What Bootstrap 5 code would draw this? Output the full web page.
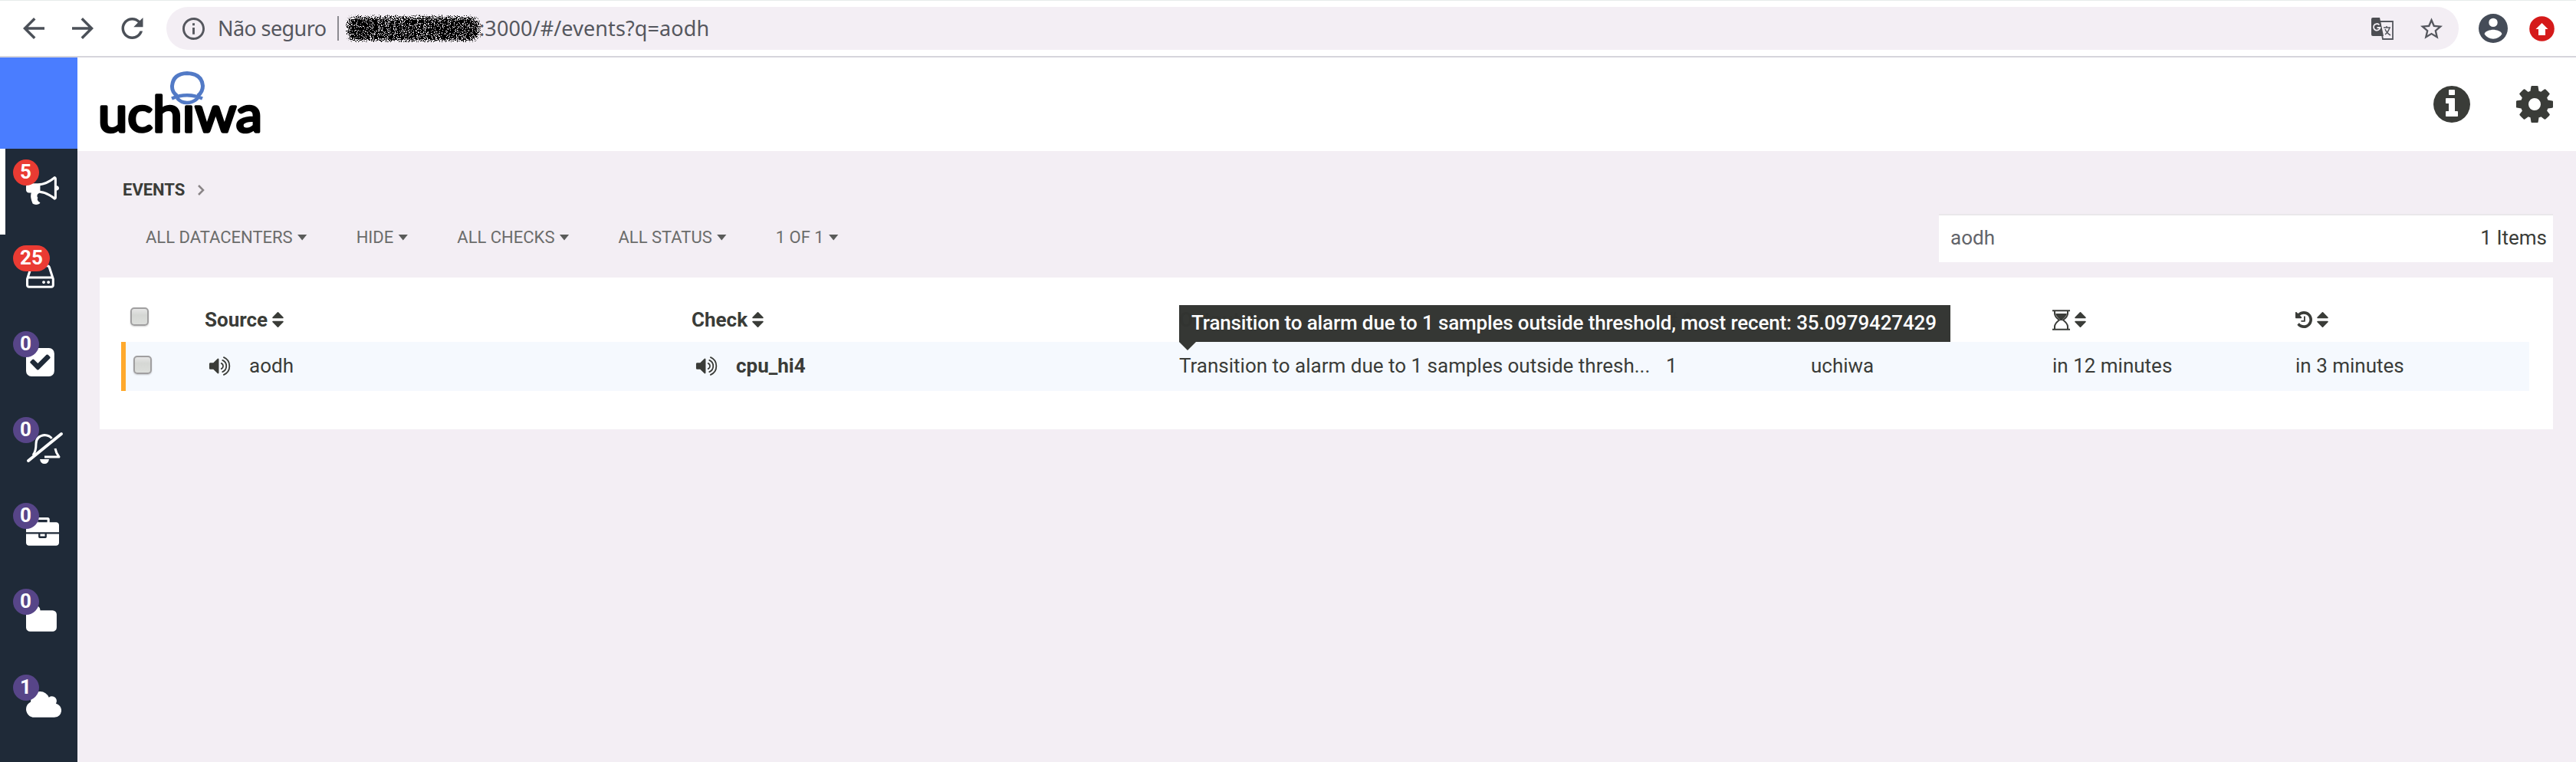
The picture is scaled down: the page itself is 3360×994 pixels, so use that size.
<!DOCTYPE html>
<html lang="pt-BR">
<head>
<meta charset="utf-8">
<title>Uchiwa</title>
<link href="https://cdn.jsdelivr.net/npm/bootstrap@5.3.0/dist/css/bootstrap.min.css" rel="stylesheet">
<style>
body{font-family:Roboto,sans-serif;background:#f3eef4;color:#3a3c38;font-size:26px;line-height:32px;height:994px;overflow:hidden}
svg{display:block;flex:none}
.chrome-bar{height:75px;border-top:1px solid #e6ebea;border-bottom:2px solid #d6d5dc;padding:8px 28px 8px 30px;font-family:"Noto Sans",sans-serif;color:#4b5058}
.chrome-gap{margin-left:36px}
.omnibox{height:56px;border-radius:28px;background:#f3eef4;margin-left:30px;padding:0 21px;color:#55575e;font-size:27px}
.omnibox .insecure{margin-left:17px;width:141px;white-space:nowrap;letter-spacing:-.6px}
.omnibox .sep{width:2px;height:32px;background:#8b8a90;margin:0 9px 0 15px}
.omnibox .url{margin-left:-2px;white-space:nowrap;letter-spacing:.1px}
.side{width:101px;background:#1f2a38}
.side .brand-block{height:119px;background:#4a7dff}
.side-item{height:112px;padding:33px 0 0 34px;color:#fff;border:0}
.side-item.active{box-shadow:inset 7px 0 #fff}
.side-item svg{height:43px}
.side-badge{left:17px;top:14px;height:34px;min-width:34px;padding:0 9px;border-radius:17px;background:#574588;font-weight:700;font-size:26px;line-height:33px;color:#fff}
.side-badge.alert-red{background:#ea3b33}
.top-head{height:122px;padding:0 30px 0 26px;border-left:2px solid #fff}
.crumb{font-size:22px;font-weight:700;height:30px;line-height:30px;margin:36px 0 0 59px}
.filters{height:63px;margin-top:16px;padding-left:89px;font-size:22px;color:#6b6c6b;padding-right:30px}
.filters .drop{white-space:nowrap;gap:6px;margin:-2px 64px 0 0}
.caret-d{width:13px;height:8px;background:#5a5b5a;clip-path:polygon(0 0,100% 0,50% 100%)}
.search-box{width:801px;height:63px;background:#fff;border-top:2px solid #e9e7ea;padding:0 8px 4px 15px;font-size:26px}
.search-box .query{color:#62646a}
.search-box .count{color:#3a3c38}
.panel{margin:20px 30px 0 29px;height:198px;background:#fff;padding:28px 31px 50px 28px}
.g-row{display:grid;grid-template-columns:109px 635px 636px 635px 189px 315px 317px 1fr;align-items:center;white-space:nowrap;padding-bottom:2px}
.g-head{height:56px;font-weight:700}
.g-body{height:64px;background:#f5f9fe;box-shadow:inset 6px 0 #ffa92c}
.chk{width:24px;height:24px;border:2px solid #a09fa0;border-radius:5px;background:linear-gradient(#e6e6e6,#d5d7d4 40%,#dcdedb);box-shadow:0 1px 2px #0003}
.g-head .chk{margin:-9px 0 0 12px}
.g-body .chk{margin:-2px 0 0 16px}
.vol{margin-left:5px;margin-right:24px}
.sort{margin-left:6px}
.tip{left:0;top:-3px;width:1006px;height:48px;background:#323431;opacity:.985;color:#fff;font-weight:500;line-height:47px;padding-left:16px;letter-spacing:-.14px;z-index:2}
.tip:after{content:"";position:absolute;left:0;top:48px;width:22px;height:11px;background:#323431;clip-path:polygon(0 0,100% 0,50% 100%)}
</style>
</head>
<body class="d-flex flex-column">
<svg width="0" height="0" class="position-absolute">
<symbol id="sort" viewBox="384 192 1024 1408"><path d="M1408 1088q0 26-19 45l-448 448q-19 19-45 19t-45-19l-448-448q-19-19-19-45t19-45 45-19h896q26 0 45 19t19 45zm0-384q0 26-19 45t-45 19h-896q-26 0-45-19t-19-45 19-45l448-448q19-19 45-19t45 19l448 448q19 19 19 45z"/></symbol>
<symbol id="vol" viewBox="64 128 1664 1536"><path d="M832 352v1088q0 26-19 45t-45 19-45-19l-333-333h-262q-26 0-45-19t-19-45v-384q0-26 19-45t45-19h262l333-333q19-19 45-19t45 19 19 45z"/><path d="M1036 672a250 250 0 0 1 0 448M1130 430a510 510 0 0 1 0 932M1230 200a760 760 0 0 1 0 1392" fill="none" stroke="currentColor" stroke-width="110" stroke-linecap="round"/></symbol>
</svg>

<nav class="chrome-bar bg-white d-flex align-items-center flex-shrink-0">
  <svg width="28" height="28" viewBox="4 4 16 16" fill="currentColor"><path d="M20 11H7.83l5.59-5.59L12 4l-8 8 8 8 1.41-1.41L7.83 13H20v-2z"/></svg>
  <svg class="chrome-gap" width="28" height="28" viewBox="4 4 16 16" fill="currentColor"><path d="M12 4l-1.41 1.41L16.17 11H4v2h12.17l-5.58 5.59L12 20l8-8z"/></svg>
  <svg class="chrome-gap" width="29" height="28" viewBox="4 4 16 16" fill="currentColor"><path d="M17.65 6.35C16.2 4.9 14.21 4 12 4c-4.42 0-7.99 3.58-7.99 8s3.57 8 7.99 8c3.73 0 6.84-2.55 7.73-6h-2.08c-.82 2.33-3.04 4-5.65 4-3.31 0-6-2.69-6-6s2.69-6 6-6c1.66 0 3.14.69 4.22 1.78L13 11h7V4l-2.35 2.35z"/></svg>
  <div class="omnibox d-flex align-items-center flex-grow-1">
    <svg width="29" height="29" viewBox="2 2 20 20" fill="currentColor"><path d="M11 7h2v2h-2zm0 4h2v6h-2zm1-9C6.48 2 2 6.48 2 12s4.48 10 10 10 10-4.48 10-10S17.52 2 12 2zm0 18c-4.41 0-8-3.59-8-8s3.59-8 8-8 8 3.59 8 8-3.59 8-8 8z"/></svg>
    <span class="insecure">Não seguro</span><span class="sep"></span>
    <svg width="176" height="36" viewBox="0 0 176 36"><filter id="grain" x="0" y="0" width="176" height="36" filterUnits="userSpaceOnUse" color-interpolation-filters="sRGB"><feTurbulence type="fractalNoise" baseFrequency=".9" numOctaves="2" seed="4" result="n"/><feGaussianBlur in="SourceAlpha" stdDeviation="2.5" result="b"/><feColorMatrix in="n" values="0 0 0 0 0  0 0 0 0 0  0 0 0 0 0  1 0 0 0 0" result="c"/><feComposite in="b" in2="c" operator="arithmetic" k2="6" k3="22" k4="-14.6"/><feComposite in2="b" operator="in"/><feComponentTransfer><feFuncR type="linear" slope="0"/><feFuncG type="linear" slope="0"/><feFuncB type="linear" slope="0"/><feFuncA type="linear" slope="4"/></feComponentTransfer></filter><g filter="url(#grain)"><rect x="1" y="3" width="174" height="31" rx="14"/></g></svg>
    <span class="url">:3000/#/events?q=aodh</span>
    <svg class="ms-auto" width="29" height="29" viewBox="0 0 29 29"><path d="M11 5h17v23H15z" fill="#f3eef4" stroke="#55575e" stroke-width="1.8"/><path d="M2 0h9l5 24H2q-2 0-2-2V2q0-2 2-2z" fill="#4c4d52"/><path d="M10.500 9.500A4.300 4.300 0 1 0 11.500 13H7.500" fill="none" stroke="#f3eef4" stroke-width="1.800"/><path d="M16 13h9M20 11v2M24 13q-2 6-6 9M18 15q2 5 7 8" fill="none" stroke="#55575e" stroke-width="1.500"/></svg>
    <svg style="margin-left:35px" width="29" height="28" viewBox="2 2 20 19" fill="currentColor"><path d="M22 9.240l-7.190-.62L12 2 9.190 8.630 2 9.240l5.460 4.730L5.820 21 12 17.270 18.180 21l-1.630-7.030L22 9.240zM12 15.400l-3.760 2.270 1-4.280-3.320-2.880 4.380-.38L12 6.100l1.710 4.040 4.380.38-3.320 2.880 1 4.280L12 15.400z"/></svg>
  </div>
  <svg style="margin-left:26px" width="38" height="38" viewBox="2 2 20 20" fill="#454c58"><path d="M12 2a10 10 0 1 0 0 20 10 10 0 0 0 0-20zm0 3a3 3 0 1 1 0 6 3 3 0 0 1 0-6zm0 14.200a7.200 7.200 0 0 1-6-3.220c.03-1.990 4-3.080 6-3.080s5.970 1.090 6 3.080a7.200 7.200 0 0 1-6 3.220z"/></svg>
  <svg style="margin-left:28px" width="33" height="33" viewBox="0 0 33 33"><circle cx="16.500" cy="16.500" r="16.300" fill="#d51a1a"/><path d="M16.500 9l8 8h-3.500v8h-9v-8H8.500z" fill="#fff"/></svg>
</nav>

<div class="d-flex flex-grow-1">
  <aside class="side flex-shrink-0">
    <div class="brand-block"></div>
    <div class="side-item active position-relative"><svg viewBox="0 0 1792 1792" fill="#fff"><path d="M1664 640q53 0 90.500 37.500t37.500 90.500-37.500 90.500-90.500 37.500v384q0 52-38 90t-90 38q-417-347-812-380-58 19-91 66t-31 100.500 40 92.500q-20 33-23 65.500t6 58 33.500 55 48 50 61.500 50.500q-29 58-111.500 83t-168.500 11.500-132-55.500q-7-23-29.500-87.500t-32-94.500-23-89-15-101 3.500-98.500 22-110.500h-122q-66 0-113-47t-47-113v-192q0-66 47-113t113-47h480q435 0 896-384 52 0 90 38t38 90v384zm-128 604v-954q-394 302-768 343v270q377 42 768 341z"/></svg><span class="side-badge alert-red position-absolute">5</span></div>
    <div class="side-item position-relative"><svg viewBox="128 0 1536 1792" fill="#fff"><path d="M1168 1216q0 33-23.500 56.500t-56.500 23.500-56.500-23.500-23.500-56.500 23.500-56.500 56.500-23.500 56.500 23.500 23.500 56.500zm256 0q0 33-23.500 56.500t-56.500 23.500-56.500-23.500-23.500-56.500 23.500-56.500 56.500-23.500 56.500 23.500 23.500 56.500zm112 160v-320q0-13-9.500-22.500t-22.500-9.500h-1216q-13 0-22.500 9.500t-9.500 22.500v320q0 13 9.500 22.500t22.500 9.500h1216q13 0 22.500-9.500t9.500-22.500zm-1230-480h1180l-157-482q-4-13-16-21.500t-26-8.500h-782q-14 0-26 8.500t-16 21.500zm1358 160v320q0 66-47 113t-113 47h-1216q-66 0-113-47t-47-113v-320q0-25 16-75l197-606q17-53 63-86t101-33h782q55 0 101 33t63 86l197 606q16 50 16 75z"/></svg><span class="side-badge alert-red position-absolute">25</span></div>
    <div class="side-item position-relative"><svg viewBox="128 0 1536 1792" fill="#fff"><path d="M813 1299l614-614q19-19 19-45t-19-45l-102-102q-19-19-45-19t-45 19l-467 467-211-211q-19-19-45-19t-45 19l-102 102q-19 19-19 45t19 45l358 358q19 19 45 19t45-19zm851-883v960q0 119-84.500 203.500t-203.500 84.500h-960q-119 0-203.500-84.500t-84.500-203.500v-960q0-119 84.500-203.500t203.500-84.500h960q119 0 203.500 84.500t84.500 203.500z"/></svg><span class="side-badge position-absolute">0</span></div>
    <div class="side-item position-relative"><svg viewBox="0 0 49 43" fill="none" stroke="#fff" stroke-width="3"><path d="M9 31Q13 26 13 16Q13 6 24 4.500Q31 5 33.500 9M38 22Q39 28 43 33H24" stroke-linejoin="round"/><path d="M3 38L46 3" stroke-width="4" stroke-linecap="round"/><path d="M18 36h12q-1 6-6 6t-6-6z" fill="#fff" stroke="none"/></svg><span class="side-badge position-absolute">0</span></div>
    <div class="side-item position-relative"><svg viewBox="0 0 1792 1792" fill="#fff"><path d="M640 256h512v-128h-512v128zm1152 640v480q0 66-47 113t-113 47h-1472q-66 0-113-47t-47-113v-480h672v160q0 26 19 45t45 19h320q26 0 45-19t19-45v-160h672zm-768 0v128h-256v-128h256zm768-480v384h-1792v-384q0-66 47-113t113-47h352v-160q0-40 28-68t68-28h576q40 0 68 28t28 68v160h352q66 0 113 47t47 113z"/></svg><span class="side-badge position-absolute">0</span></div>
    <div class="side-item position-relative"><svg viewBox="64 0 1664 1792" fill="#fff"><path d="M1728 608v704q0 92-66 158t-158 66h-1216q-92 0-158-66t-66-158v-960q0-92 66-158t158-66h320q92 0 158 66t66 158v32h672q92 0 158 66t66 158z"/></svg><span class="side-badge position-absolute">0</span></div>
    <div class="side-item position-relative"><svg viewBox="64 0 1920 1792" fill="#fff"><path d="M1984 1152q0 159-112.500 271.500t-271.500 112.500h-1088q-185 0-316.500-131.500t-131.500-316.500q0-132 71-241.500t187-163.500q-2-28-2-43 0-212 150-362t362-150q158 0 286.500 88t187.500 230q70-62 166-62 106 0 181 75t75 181q0 75-41 138 129 30 213 134.500t84 239.500z"/></svg><span class="side-badge position-absolute">1</span></div>
  </aside>

  <main class="flex-grow-1 d-flex flex-column">
    <header class="top-head bg-white d-flex align-items-center">
      <svg width="214" height="100" viewBox="129 85 214 100"><text x="128" y="171" textLength="214" lengthAdjust="spacingAndGlyphs" font-family="Lato, sans-serif" font-weight="400" font-size="66" fill="#000" stroke="#000" stroke-width="3.600" stroke-linejoin="round">uchiwa</text><path d="M231 127Q224 119 224.500 111Q226 95 244 94Q263 95 264.500 111Q264.500 119 258 127L244 133z" fill="#fff"/><path d="M231 124Q224 119 224.500 111Q226 95 244 94.500Q263 95 264.500 111Q264.500 119 258 124" fill="none" stroke="#527ac6" stroke-width="5"/><path d="M224 127.500Q244 119 264 127.500M231 127Q236 133 244 133T258 127" fill="#fff" stroke="#527ac6" stroke-width="4.500"/></svg>
      <svg class="ms-auto" width="48" height="48" viewBox="128 128 1536 1536" fill="#3a3c38"><path d="M1152 1376v-160q0-14-9-23t-23-9h-96v-512q0-14-9-23t-23-9h-320q-14 0-23 9t-9 23v160q0 14 9 23t23 9h96v320h-96q-14 0-23 9t-9 23v160q0 14 9 23t23 9h448q14 0 23-9t9-23zm-128-896v-160q0-14-9-23t-23-9h-192q-14 0-23 9t-9 23v160q0 14 9 23t23 9h192q14 0 23-9t9-23zm640 416q0 209-103 385.500t-279.500 279.500-385.500 103-385.500-103-279.500-279.500-103-385.500 103-385.500 279.500-279.500 385.500-103 385.500 103 279.500 279.500 103 385.500z"/></svg>
      <svg style="margin-left:60px" width="48" height="48" viewBox="128 128 1536 1536" fill="#3a3c38"><path d="M1152 896q0-106-75-181t-181-75-181 75-75 181 75 181 181 75 181-75 75-181zm512-109v222q0 12-8 23t-20 13l-185 28q-19 54-39 91 35 50 107 138 10 12 10 25t-9 23q-27 37-99 108t-94 71q-12 0-26-9l-138-108q-44 23-91 38-16 136-29 186-7 28-36 28h-222q-14 0-24.500-8.500t-11.500-21.500l-28-184q-49-16-90-37l-141 107q-10 9-25 9-14 0-25-11-126-114-165-168-7-10-7-23 0-12 8-23 15-21 51-66.500t54-70.500q-27-50-41-99l-183-27q-13-2-21-12.500t-8-23.500v-222q0-12 8-23t19-13l186-28q14-46 39-92-40-57-107-138-10-12-10-24 0-10 9-23 26-36 98.500-107.500t94.500-71.500q13 0 26 10l138 107q44-23 91-38 16-136 29-186 7-28 36-28h222q14 0 24.500 8.500t11.500 21.500l28 184q49 16 90 37l142-107q9-9 24-9 13 0 25 10 129 119 165 170 7 8 7 22 0 12-8 23-15 21-51 66.500t-54 70.500q26 50 41 98l183 28q13 2 21 12.500t8 23.500z"/></svg>
    </header>
    <div class="crumb d-flex align-items-center"><span>EVENTS</span><svg style="margin-left:17px" width="9" height="14" viewBox="0 0 9 14" fill="none" stroke="#8a8587" stroke-width="2.500"><path d="M1 1l6 6-6 6"/></svg></div>
    <div class="filters d-flex align-items-center">
      <div class="drop d-flex align-items-center"><span>ALL DATACENTERS</span><i class="caret-d"></i></div>
      <div class="drop d-flex align-items-center"><span>HIDE</span><i class="caret-d"></i></div>
      <div class="drop d-flex align-items-center"><span>ALL CHECKS</span><i class="caret-d"></i></div>
      <div class="drop d-flex align-items-center"><span>ALL STATUS</span><i class="caret-d"></i></div>
      <div class="drop d-flex align-items-center"><span>1 OF 1</span><i class="caret-d"></i></div>
      <div class="search-box ms-auto d-flex align-items-center justify-content-between"><span class="query">aodh</span><span class="count">1 Items</span></div>
    </div>
    <section class="panel">
      <div class="g-row g-head">
        <span class="chk"></span>
        <span class="d-flex align-items-center"><span>Source</span><svg class="sort" width="15" height="20" fill="currentColor"><use href="#sort"/></svg></span>
        <span class="d-flex align-items-center"><span>Check</span><svg class="sort" width="15" height="20" fill="currentColor"><use href="#sort"/></svg></span>
        <span class="d-flex align-items-center position-relative"><span>Output</span><svg class="sort" width="15" height="20" fill="currentColor"><use href="#sort"/></svg>
          <span class="tip position-absolute">Transition to alarm due to 1 samples outside threshold, most recent: 35.0979427429</span></span>
        <span class="d-flex align-items-center"><span>#</span><svg class="sort" width="15" height="20" fill="currentColor"><use href="#sort"/></svg></span>
        <span class="d-flex align-items-center"><svg width="28" height="26" viewBox="64 0 1920 1792" fill="currentColor"><path d="M1984 1152q0 159-112.500 271.500t-271.500 112.500h-1088q-185 0-316.500-131.500t-131.500-316.500q0-132 71-241.500t187-163.500q-2-28-2-43 0-212 150-362t362-150q158 0 286.500 88t187.500 230q70-62 166-62 106 0 181 75t75 181q0 75-41 138 129 30 213 134.500t84 239.500z"/></svg><svg class="sort" width="15" height="20" fill="currentColor"><use href="#sort"/></svg></span>
        <span class="d-flex align-items-center"><svg width="23" height="27" viewBox="0 0 23 27" fill="none" stroke="currentColor" stroke-width="2"><path d="M0 1.200h23M0 25.800h23M3 1v4q0 4 6 8.500Q3 18 3 22v4M20 1v4q0 4-6 8.500Q20 18 20 22v4"/><path d="M4 5h15q-1 4-6 8v1h-3v-1Q5 9 4 5z" fill="currentColor" stroke="none"/></svg><svg class="sort" width="15" height="20" fill="currentColor"><use href="#sort"/></svg></span>
        <span class="d-flex align-items-center"><svg width="22" height="22" viewBox="128 128 1536 1536" fill="currentColor"><path d="M1664 896q0 156-61 298t-164 245-245 164-298 61q-172 0-327-72.500t-264-204.500q-7-10-6.500-22.500t8.500-20.500l137-138q10-9 25-9 16 2 23 12 73 95 179 147t225 52q104 0 198.500-40.500t163.500-109.500 109.500-163.500 40.500-198.500-40.500-198.500-109.500-163.500-163.500-109.500-198.500-40.500q-98 0-188 35.500t-160 101.500l137 138q31 30 14 69-17 40-59 40h-448q-26 0-45-19t-19-45v-448q0-42 40-59 39-17 69 14l130 129q107-101 244.500-156.500t284.500-55.500q156 0 298 61t245 164 164 245 61 298zm-640-288v448q0 14-9 23t-23 9h-320q-14 0-23-9t-9-23v-64q0-14 9-23t23-9h224v-352q0-14 9-23t23-9h64q14 0 23 9t9 23z"/></svg><svg class="sort" width="15" height="20" fill="currentColor"><use href="#sort"/></svg></span>
      </div>
      <div class="g-row g-body">
        <span class="chk"></span>
        <span class="d-flex align-items-center"><svg class="vol" width="29" height="25" fill="currentColor"><use href="#vol"/></svg><span>aodh</span></span>
        <span class="d-flex align-items-center"><svg class="vol" width="29" height="25" fill="currentColor"><use href="#vol"/></svg><span class="fw-bold">cpu_hi4</span></span>
        <span>Transition to alarm due to 1 samples outside thresh...</span><span>1</span><span>uchiwa</span><span>in 12 minutes</span><span>in 3 minutes</span>
      </div>
    </section>
  </main>
</div>
<script src="https://cdn.jsdelivr.net/npm/bootstrap@5.3.0/dist/js/bootstrap.bundle.min.js"></script>
</body>
</html>
